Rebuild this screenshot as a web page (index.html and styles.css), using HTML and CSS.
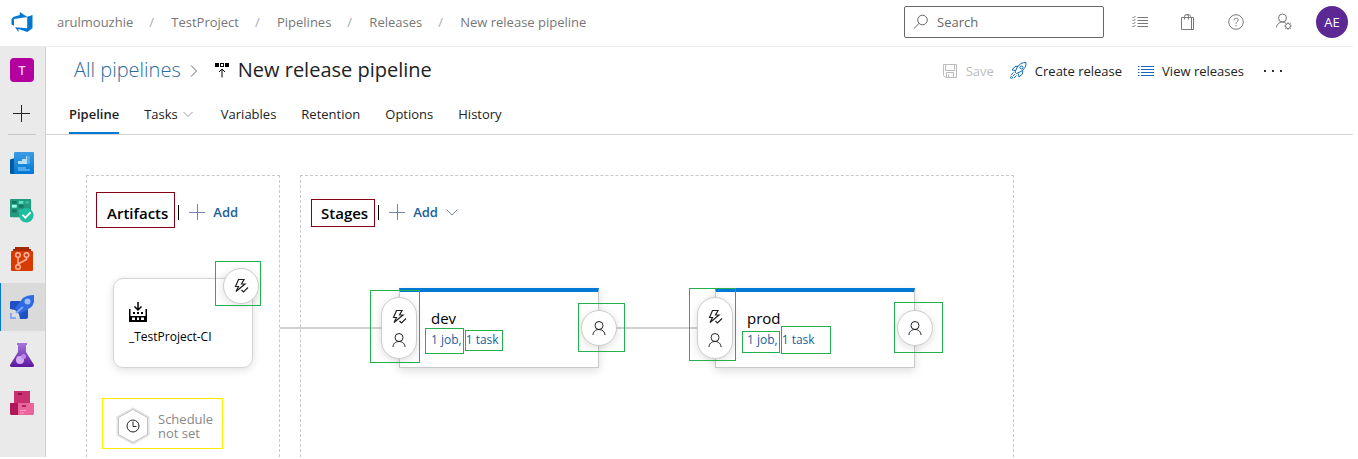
FILE: index.html
```html
<!DOCTYPE html>
<html lang="en">
<head>
<meta charset="utf-8">
<title>New release pipeline - Pipelines</title>
<link rel="stylesheet" href="styles.css">
</head>
<body>
<svg class="defs" aria-hidden="true">
  <symbol id="person" viewBox="0 0 16 16"><circle cx="8" cy="5.500" r="4"/><path d="M2 15c0-3.300 2.700-5.500 6-5.500s6 2.200 6 5.500"/></symbol>
  <symbol id="bolt" viewBox="0 0 16 16"><path stroke-width="1.200" d="M5.500 1.500h5.500L8.500 6H12L3 13.500 5.500 8.500H2.500zM8.500 12l2 2L15 9.500"/></symbol>
  <symbol id="plus" viewBox="0 0 16 16"><path d="M8.500 0v16M0 8.500h16"/></symbol>
  <symbol id="down" viewBox="0 0 12 12"><path d="M.5 3.500l5.500 5.500 5.500-5.500"/></symbol>
</svg>
<header class="topbar">
  <a class="logo" href="#" aria-label="Azure DevOps"><svg width="22" height="22" viewBox="0 0 22 22"><path fill="#0078d4" d="M21.500 4v13.200L16.300 21 7.500 18v3L4 16.300l12.200 1V5.800zM16.300 5.900 8.800 1v2.900L2.200 5.900.5 8.200v5.300L3 14.700V7.900z"/></svg></a>
  <nav class="crumbs" aria-label="Breadcrumb">
    <a href="#">arulmouzhie</a><i>/</i><a href="#">TestProject</a><i>/</i><a href="#">Pipelines</a><i>/</i><a href="#">Releases</a><i>/</i><a href="#">New release pipeline</a>
  </nav>
  <label class="search"><svg width="16" height="16" viewBox="0 0 16 16"><circle cx="9.500" cy="6" r="4.800"/><path d="M6 9.500.8 14.700"/></svg><input type="text" placeholder="Search" aria-label="Search"></label>
  <div class="tools">
    <button aria-label="Work items"><svg width="16" height="16" viewBox="0 0 16 16"><path d="M5.500 3.500H16M5.500 6.500H16M5.500 9.500H16M5.500 12.500H16M.5 3l1 1 2-2M.5 6l1 1 2-2M.5 9l1 1 2-2M.5 12l1 1 2-2"/></svg></button>
    <button aria-label="Marketplace"><svg width="16" height="16" viewBox="0 0 16 16"><path d="M1.500 3.500h12v12h-12zM4.500 5.500V2.500a2 2 0 0 1 4 0v3M6.500 1c2-1 4 0 4 1.500v1M11.500 3.500v12"/></svg></button>
    <button aria-label="Help"><svg width="16" height="16" viewBox="0 0 16 16"><circle cx="8" cy="8" r="7.300"/><path d="M6 6.300c0-3 4.200-2.700 4.200-.2C10.200 7.600 8 7.700 8 9.800M8 11v1.300"/></svg></button>
    <button aria-label="User settings"><svg width="18" height="18" viewBox="0 0 18 18"><circle cx="7.500" cy="5" r="4"/><path d="M1.500 14.500c.2-3 2.500-5.500 6-5.500 1.200 0 2 .2 3 .7"/><circle cx="13" cy="13" r="2.500"/><path d="M13 9.300v1.200M13 15.500v1.200M9.300 13h1.200M15.500 13h1.200M10.400 10.400l.8.800M14.800 14.800l.8.800M15.600 10.400l-.8.800M11.200 14.800l-.8.800"/></svg></button>
    <button class="avatar">AE</button>
  </div>
</header>
<div class="shell">
  <nav class="rail" aria-label="Project">
    <a class="project" href="#">T</a>
    <button class="new" aria-label="New"><svg width="17" height="17" viewBox="0 0 17 17"><path d="M8.500 0v17M0 8.500h17"/></svg></button>
    <a href="#" aria-label="Overview"><svg width="24" height="24" viewBox="0 0 24 24"><defs><linearGradient id="gb" x2="0" y2="1"><stop stop-color="#3c9be5"/><stop offset="1" stop-color="#0078d4"/></linearGradient></defs><path fill="#005ba1" d="M0 8.500 5 7v16H1a1 1 0 0 1-1-1z"/><rect x="4" y="1" width="20" height="22" rx="1" fill="url(#gb)"/><path fill="#b5e1fb" d="M8 13v-3h4V8h4V5h4v8z"/><path fill="#50a9ea" d="M8 16h8v2h4v2H8zM17 5h3v8h-3z"/></svg></a>
    <a href="#" aria-label="Boards"><svg width="24" height="24" viewBox="0 0 25 25"><rect width="22" height="19" y="0" rx="1" fill="#219a80"/><path fill="#14765f" d="M2 2h5v3H2zM2 11h5v3H2zM9 6h5v3H9z"/><path fill="#5ce0bf" d="M9 2h5v3H9z"/><path fill="#9cffe4" d="M2 6h5v3H2z"/><path fill="#39b79a" d="M16 2h4v3h-4zM9 11h3v3H9z"/><circle cx="17" cy="17" r="7.500" fill="#1dbf9f"/><path d="m13 16.500 3 3 5.500-5.500" stroke="#fff" stroke-width="2"/></svg></a>
    <a href="#" aria-label="Repos"><svg width="24" height="24" viewBox="0 0 24 24"><path fill="#a62a05" d="M5 0h14v2h2v3H3V2h2z"/><rect x="1" y="4" width="22" height="20" rx="1" fill="#d83b01"/><g stroke="#ffb59b" stroke-width="1.500"><circle cx="8" cy="8" r="2.300"/><circle cx="16.500" cy="8" r="2.300"/><circle cx="8" cy="20" r="2.300"/><path d="M8 10.500v7M16.500 10.500v2L8 17"/></g></svg></a>
    <a class="current" href="#" aria-label="Pipelines"><svg width="24" height="24" viewBox="0 0 24 24"><path fill="#1e4fc4" d="M1 6h9l8 9v8l-2 1-6 0-1-5-4-4-5-1V7z"/><path fill="#2f6ae0" d="M5 13 13 3q4-3 11-3v7q-1 4-4 6L10 19z"/><circle cx="17.500" cy="6.500" r="3" fill="#9dbcff"/><path stroke="#7ea6fb" stroke-width="2" d="m6 18 7-6"/><path fill="#82a8f7" d="M0 18h2v4h4v2H0z"/></svg></a>
    <a href="#" aria-label="Test Plans"><svg width="24" height="24" viewBox="0 0 24 24"><defs><linearGradient id="gp" x2="0" y2="1"><stop stop-color="#a777dc"/><stop offset="1" stop-color="#5b179f"/></linearGradient></defs><path fill="url(#gp)" d="M7 0h10v2h-1v7l8 13q.5 2-2 2H2q-2.500 0-2-2L8 9V2H7z"/><circle cx="10" cy="17" r="4" fill="#d3acf4"/><circle cx="13.500" cy="13.500" r="2.500" fill="#bd87eb"/></svg></a>
    <a href="#" aria-label="Artifacts"><svg width="24" height="24" viewBox="0 0 24 24"><path fill="#c9306f" d="M4 0h16v12H4z"/><path fill="#891247" d="M8 2h4v2H8zM4 14h3v2H4z"/><path fill="#af1857" d="M0 12h8v12H1l-1-1z"/><path fill="#ea659c" d="M8 12h16v11l-1 1H8z"/><path fill="#b0225e" d="M12 14h4v2h-4z"/><path stroke="#ff9dc5" d="M10 19.500h6M10 22h4"/></svg></a>
  </nav>
  <main class="page">
    <div class="titlebar">
      <a class="parent" href="#">All pipelines</a>
      <svg class="sep" width="8" height="12" viewBox="0 0 8 12"><path d="m1 .5 5.500 5.500L1 11.500"/></svg>
      <svg class="kind" width="14" height="15" viewBox="0 0 14 15"><path fill="#000" d="M0 0h4v4H0zM5 0h4v4H5zM10 0h4v4h-4z"/><path fill="#fff" d="M6 1h2v2H6z"/><path d="M7 14.500V6M4 9l3-3 3 3" stroke="#000"/></svg>
      <h1>New release pipeline</h1>
      <div class="actions">
        <button disabled><svg width="16" height="16" viewBox="0 0 16 16"><path d="M1.500 1.500h13v13h-11l-2-2zM3.500 1.500v6h9v-6M4.500 14.500v-5h7v5M6.500 11.500v3"/></svg>Save</button>
        <button><svg class="blue" width="17" height="17" viewBox="0 0 17 17"><path d="M6.500 11.500 5 10q2-6.500 6-8.500 2-1 5-1 .2 3-1 5-2 4-8.500 6zM5.500 8.500 2 8l3-3.500 3.500-.3M8.500 11.500l.5 3.500 3.500-3 .3-3.500M5 12 3 14M3.500 10.500.8 13M6.500 13.500 4 16"/><circle cx="11.500" cy="5.500" r="1.500"/><circle cx="1.500" cy="15.500" r="1"/></svg>Create release</button>
        <button><svg class="blue" width="16" height="16" viewBox="0 0 16 16"><path d="M3 3.500h13M3 6.500h13M3 9.500h13M3 12.500h13M0 3.500h1.500M0 6.500h1.500M0 9.500h1.500M0 12.500h1.500"/></svg>View releases</button>
        <button aria-label="More"><svg width="18" height="4" viewBox="0 0 18 4"><path fill="#333" stroke="none" d="M0 1h2v2H0zM8 1h2v2H8zM16 1h2v2h-2z"/></svg></button>
      </div>
    </div>
    <nav class="tabs" aria-label="Pipeline sections">
      <a class="active" href="#">Pipeline</a><a class="menu" href="#">Tasks<svg width="10" height="10" viewBox="0 0 12 12"><use href="#down"/></svg></a><a href="#">Variables</a><a href="#">Retention</a><a href="#">Options</a><a href="#">History</a>
    </nav>
    <div class="canvas">
      <section class="panel artifacts">
        <div class="head"><h2>Artifacts<span class="mark red wide"></span></h2><button><svg width="16" height="16" viewBox="0 0 16 16"><use href="#plus"/></svg>Add</button></div>
        <div class="artifact">
          <svg width="18" height="20" viewBox="0 0 18 20"><path d="M9 0v7.500M5.500 4.500 9 8l3.500-3.500" stroke="#000" stroke-width="1.500"/><path fill="#000" d="M0 7h1.500v7h15V7H18v13H0zM4 10h2v2H4zM8 10h2v2H8zM12 10h2v2h-2z"/><path fill="#fff" d="M3 15.500h3v2.500H3zM8 15.500h2V18H8zM12 15.500h3V18h-3z"/></svg>
          <span>_TestProject-CI</span>
          <button class="badge corner" aria-label="Continuous deployment trigger"><svg width="16" height="16"><use href="#bolt"/></svg><span class="mark trigger"></span></button>
        </div>
        <button class="schedule"><svg width="34" height="38" viewBox="0 0 34 38"><path fill="#fff" stroke="#e4e4e4" stroke-width="2" d="M17 1.500 32.500 10v18L17 36.500 1.500 28V10z"/><path stroke="#c4c4c4" d="M17 2.500 31.500 10.500v17L17 35.500 2.500 27.500v-17z"/><circle cx="17" cy="19" r="6"/><path d="M17 14.500V19.500h3.500"/></svg><span>Schedule<br>not set</span></button>
      </section>
      <section class="panel stages">
        <div class="head"><h2>Stages<span class="mark red"></span></h2><button><svg width="16" height="16" viewBox="0 0 16 16"><use href="#plus"/></svg>Add<svg width="12" height="12"><use href="#down"/></svg></button></div>
        <div class="flow">
          <span class="link first"></span>
          <article class="stage">
            <h3>dev</h3>
            <p><a href="#">1 job,<span class="mark job"></span></a> <a href="#">1 task<span class="mark task"></span></a></p>
            <button class="badge pre" aria-label="Pre-deployment conditions"><svg width="16" height="16"><use href="#bolt"/></svg><svg width="16" height="16"><use href="#person"/></svg><span class="mark"></span></button>
            <button class="badge post" aria-label="Post-deployment conditions"><svg width="16" height="16"><use href="#person"/></svg><span class="mark"></span></button>
          </article>
          <span class="link"></span>
          <article class="stage prod">
            <h3>prod</h3>
            <p><a href="#">1 job,<span class="mark job"></span></a> <a href="#">1 task<span class="mark task"></span></a></p>
            <button class="badge pre" aria-label="Pre-deployment conditions"><svg width="16" height="16"><use href="#bolt"/></svg><svg width="16" height="16"><use href="#person"/></svg><span class="mark"></span></button>
            <button class="badge post" aria-label="Post-deployment conditions"><svg width="16" height="16"><use href="#person"/></svg><span class="mark"></span></button>
          </article>
        </div>
      </section>
    </div>
  </main>
</div>
</body>
</html>
```
FILE: styles.css
```css
* { box-sizing: border-box; }
body { margin: 0; padding: 0 5px 2px 0; min-height: 100vh; display: flex; flex-direction: column; background: #fff; color: #222; font: 13px/20px "Open Sans", "Noto Sans", sans-serif; }
h1, h2, h3, p { margin: 0; font-weight: 400; }
a { color: inherit; text-decoration: none; }
button { font: inherit; color: inherit; background: none; border: 0; padding: 0; display: flex; align-items: center; }
svg { fill: none; stroke: currentColor; flex: none; }
.defs { position: absolute; width: 0; height: 0; }

.topbar { display: flex; align-items: center; height: 47px; border-bottom: 1px solid #eaeaea; padding: 0 5px 2px 11px; color: #666; }
.logo { display: flex; margin-right: 24px; }
.logo svg { stroke: none; }
.crumbs { display: flex; gap: 16px; color: #777; }
.crumbs i { width: 6px; font-style: normal; color: #aaa; }
.search { display: flex; align-items: center; gap: 8px; width: 200px; height: 32px; margin-left: auto; padding: 0 8px; border: 1px solid #666; border-radius: 2px; }
.search input { min-width: 0; flex: 1; border: 0; padding: 0; font: inherit; outline: 0; background: none; }
.search input::placeholder { color: #666; }
.tools { display: flex; gap: 16px; margin-left: 20px; color: #777; }
.tools button { width: 32px; height: 32px; justify-content: center; }
.tools .avatar { border-radius: 50%; background: #5c2893; color: #fff; }

.shell { flex: 1; display: flex; }
.rail { width: 46px; background: #eaeaea; border-right: 1px solid #d0d0d0; display: flex; flex-direction: column; }
.rail > a { height: 48px; display: flex; align-items: center; justify-content: center; padding-right: 1px; }
.rail > a svg { stroke: none; }
.rail > .current { background: #dadada; border-left: 1px solid #0078d4; padding-right: 2px; }
.rail > .project { width: 24px; height: 24px; margin: 11px 10px; padding: 0; border-radius: 4px; background: #b4009e; color: #f3c8ee; font-weight: 600; }
.rail .new { height: 42px; margin: 0 9px 4px 8px; padding-right: 2px; justify-content: center; border-bottom: 1px solid #c8c8c8; }

.page { flex: 1; min-width: 0; display: flex; flex-direction: column; }
.titlebar { display: flex; align-items: center; height: 47px; padding: 0 71px 0 28px; }
.titlebar h1, .parent { font-size: 20px; line-height: 28px; padding-bottom: 2px; }
.parent { color: #2b6b9b; font-weight: 300; }
.sep { margin: 0 17px 0 9px; color: #666; }
.kind { stroke: none; margin-right: 9px; }
.actions { display: flex; gap: 16px; margin-left: auto; }
.actions button { gap: 8px; }
.actions button:disabled { color: #bcbcbc; }
.actions button:last-child { margin-left: 4px; }
.blue { color: #1268b8; }
.tabs { display: flex; gap: 25px; padding-left: 23px; border-bottom: 1px solid #d4d4d4; }
.tabs a { height: 40px; padding-top: 10px; }
.tabs .menu { padding-right: 3px; }
.tabs svg { margin-left: 5px; color: #888; }
.tabs .active { font-weight: 600; border-bottom: 2px solid #0078d4; }

.canvas { flex: 1; display: flex; gap: 20px; padding: 40px 40px 0; }
.panel { border: 1px dashed #c8c8c8; border-bottom: 0; }
.artifacts { padding: 0 26px; }
.head { display: flex; align-items: center; height: 72px; }
.artifacts .head { margin-left: -6px; margin-right: -20px; }
.stages .head { padding-left: 20px; }
.head h2 { position: relative; color: #000; font-size: 15px; font-weight: 600; line-height: 22px; padding: 2px 10px 0 0; }
.head button { height: 15px; gap: 8px; padding-left: 10px; border-left: 1px solid #000; color: #1a5f9a; font-weight: 600; }
.head svg { color: #7384ad; }
.artifact { position: relative; display: flex; flex-direction: column; width: 140px; height: 90px; margin-top: 30px; padding: 23px 15px 0; gap: 5px; border: 1px solid #d4d4d4; border-radius: 10px; box-shadow: 0 2px 9px #0002; font-size: 12px; color: #000; }
.artifact > svg { stroke: none; }
.badge { position: absolute; width: 36px; height: 36px; border: 1px solid #ccc; border-radius: 18px; background: #fff; box-shadow: 0 2px 8px #0002; color: #222; flex-direction: column; justify-content: center; gap: 7px; }
.corner { top: -11px; right: -7px; }
.schedule { margin: 30px -10px 0 -11px; width: 121px; height: 51px; padding: 4px 0 0 13px; gap: 8px; border: 1px solid #ffee00; text-align: left; line-height: 14px; color: #888; }
.schedule circle, .schedule circle + path { stroke: #222; }
.stages { min-width: 714px; }
.flow { display: flex; align-items: center; margin-top: 40px; padding-right: 98px; }
.link { width: 116px; height: 2px; background: #d0d0d0; }
.link.first { width: 119px; margin-left: -21px; }
.stage { position: relative; width: 200px; height: 80px; padding: 15px 31px; border: 1px solid #c8c8c8; border-top: 4px solid #0078d4; box-shadow: 0 3px 9px #0002; background: #fff; }
.stage h3 { font-size: 15px; line-height: 22px; color: #000; }
.stage p { display: flex; gap: 4px; font-size: 12px; line-height: 22px; color: #1a5f9a; }
.stage p a { position: relative; }
.pre { height: 62px; left: -19px; top: 5px; }
.post { right: -19px; top: 18px; }

/* Highlight frames laid over the controls */
.mark { position: absolute; inset: -8px -4px -5px -12px; border: 1px solid #22b14c; }
.red { inset: -1px 3px -3px -10px; border-color: #880015; }
.red.wide { inset: -8px 3px -4px -11px; }
.trigger { inset: -8px -3px -3px -9px; }
.post .mark { inset: -8px -9px -7px -4px; }
.job { inset: -1px -2px -3px -6px; }
.task { inset: 1px -4px 0 -1px; }
.prod .pre .mark { inset: -10px -4px -3px -9px; }
.prod .post .mark { inset: -9px -11px -8px -4px; }
.prod .job { inset: 2px -2px -2px -5px; }
.prod .task { inset: -3px -16px -3px -1px; }
```
